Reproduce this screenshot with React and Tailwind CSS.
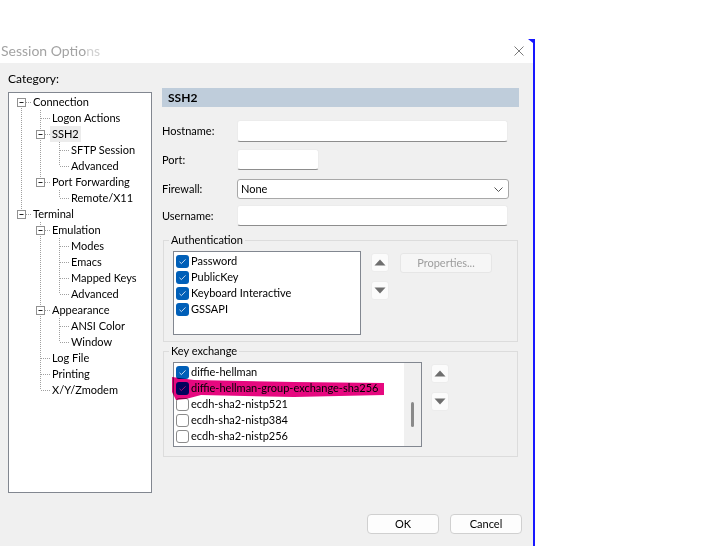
import { useMemo } from "react";

const tree = [
  {
    label: "Connection",
    children: [
      { label: "Logon Actions" },
      {
        label: "SSH2",
        selected: true,
        children: [{ label: "SFTP Session" }, { label: "Advanced" }],
      },
      { label: "Port Forwarding", children: [{ label: "Remote/X11" }] },
    ],
  },
  {
    label: "Terminal",
    children: [
      {
        label: "Emulation",
        children: [
          { label: "Modes" },
          { label: "Emacs" },
          { label: "Mapped Keys" },
          { label: "Advanced" },
        ],
      },
      { label: "Appearance", children: [{ label: "ANSI Color" }, { label: "Window" }] },
      { label: "Log File" },
      { label: "Printing" },
      { label: "X/Y/Zmodem" },
    ],
  },
];

const flatten = (nodes, guides = [], out = [], root = true) => {
  nodes.forEach((node, i) => {
    const hasNext = i < nodes.length - 1;
    out.push({
      ...node,
      guides,
      hasNext,
      firstRoot: root && i === 0,
      hasChildren: !!node.children,
    });
    if (node.children) flatten(node.children, [...guides, hasNext], out, false);
  });
  return out;
};

const dot = { stroke: "#a0a0a0", strokeDasharray: "1 1" };

const TreeCell = ({ up, down, branch, box }) => (
  <svg width="19" height="16" className="shrink-0">
    {up && <line x1="9.5" y1="0" x2="9.5" y2="8" {...dot} />}
    {down && <line x1="9.5" y1="8" x2="9.5" y2="16" {...dot} />}
    {branch && <line x1="10" y1="8.5" x2="19" y2="8.5" {...dot} />}
    {box && (
      <>
        <rect x="5.5" y="4.5" width="8" height="8" fill="#fff" stroke="#919191" />
        <line x1="7.5" y1="8.5" x2="11.5" y2="8.5" stroke="#222" />
      </>
    )}
  </svg>
);

const CategoryTree = () => {
  const rows = useMemo(() => flatten(tree), []);
  return (
    <div className="h-[401px] w-[144px] border border-[#828790] bg-white pl-[3px] pt-[1px]">
      {rows.map((row, i) => (
        <div key={i} className="flex h-[16px] items-center">
          {row.guides.map((g, j) => (
            <TreeCell key={j} up={g} down={g} />
          ))}
          <TreeCell up={!row.firstRoot} down={row.hasNext} branch box={row.hasChildren} />
          {row.selected ? (
            <span className="whitespace-nowrap bg-[#ececec] px-[2px]">{row.label}</span>
          ) : (
            <span className="ml-[2px] whitespace-nowrap">{row.label}</span>
          )}
        </div>
      ))}
    </div>
  );
};

const Check = ({ checked }) =>
  checked ? (
    <span className="flex h-[13px] w-[13px] shrink-0 items-center justify-center rounded-[3px] bg-[#005fb8]">
      <svg width="9" height="9" viewBox="0 0 9 9">
        <path d="M1.5 4.8 L3.4 6.6 L7.5 2.4" fill="none" stroke="#dce8f5" strokeWidth="0.9" />
      </svg>
    </span>
  ) : (
    <span className="h-[13px] w-[13px] shrink-0 rounded-[3px] border border-[#8b8b8b] bg-white" />
  );

const ListItem = ({ checked, children }) => (
  <div className="flex h-[16px] items-center pl-[2px]">
    <Check checked={checked} />
    <span className="ml-[2px] whitespace-nowrap">{children}</span>
  </div>
);

const ArrowButton = ({ down }) => (
  <div className="flex h-[19px] w-[18px] items-center justify-center rounded-[3px] border border-[#ececec] bg-[#fbfbfb]">
    <svg width="12" height="7" viewBox="0 0 12 7">
      {down ? (
        <path d="M0.5 0.5 H11.5 L6 6.5 Z" fill="#6e6e6e" />
      ) : (
        <path d="M0.5 6.5 H11.5 L6 0.5 Z" fill="#6e6e6e" />
      )}
    </svg>
  </div>
);

const Field = ({ label, className, children }) => (
  <div className={"flex items-center " + className}>
    <span className="w-[75px]">{label}</span>
    {children}
  </div>
);

const inputCls =
  "rounded-[3px] border border-[#ececec] border-b-[#8d8d8d] bg-white";

const keyExchange = [
  ["diffie-hellman", true],
  ["diffie-hellman-group-exchange-sha256", true],
  ["ecdh-sha2-nistp521", false],
  ["ecdh-sha2-nistp384", false],
  ["ecdh-sha2-nistp256", false],
];

export default function App() {
  return (
    <div className="h-[546px] w-[727px] overflow-hidden bg-white font-['Lato',sans-serif] text-[11px] leading-[16px] text-black">
      <div className="mt-[39px] flex h-[507px] w-[535px] flex-col border-r-2 border-[#1717ff]">
        {/* title bar */}
        <div className="flex h-[24px] shrink-0 items-center bg-white">
          <span className="flex-1 pl-[1px] text-[14px] leading-[18px] text-[#a3a3a3]">
            Session Optio<span className="text-[#d0d0d0]">ns</span>
          </span>
          <svg width="10" height="10" viewBox="0 0 10 10">
            <path d="M0.5 0.5 L9.5 9.5 M9.5 0.5 L0.5 9.5" stroke="#7a7a7a" strokeWidth="1" />
          </svg>
          <svg width="5" height="4" viewBox="0 0 5 4" className="ml-[4px] self-start">
            <path d="M0 0 H5 V4 Z" fill="#1717ff" />
          </svg>
        </div>

        {/* body */}
        <div className="flex flex-1 flex-col bg-[#f0f0f0]">
          <div className="flex">
            <div className="ml-[8px] mt-[8px] flex flex-col">
              <span className="text-[12px]">Category:</span>
              <div className="mt-[5px]">
                <CategoryTree />
              </div>
            </div>

            <div className="ml-[10px] mt-[25px] w-[357px]">
              <div className="flex h-[19px] items-center bg-[#bfcddb] pl-[6px] text-[12px] font-bold">SSH2</div>

              <Field label="Hostname:" className="mt-[13px]">
                <div className={inputCls + " h-[22px] w-[271px]"} />
              </Field>
              <Field label="Port:" className="mt-[7px]">
                <div className={inputCls + " h-[21px] w-[82px]"} />
              </Field>
              <Field label="Firewall:" className="mt-[9px]">
                <div className="flex h-[20px] w-[272px] items-center justify-between rounded-[3px] border border-[#a8a8a8] bg-white pl-[3px] pr-[5px]">
                  <span>None</span>
                  <svg width="9" height="5" viewBox="0 0 9 5">
                    <path d="M0.5 0.5 L4.5 4.5 L8.5 0.5" fill="none" stroke="#555" />
                  </svg>
                </div>
              </Field>
              <Field label="Username:" className="mt-[6px]">
                <div className={inputCls + " h-[21px] w-[271px]"} />
              </Field>

              <fieldset className="ml-[1px] mt-[6px] w-[355px] border border-[#dcdcdc] px-[5px] pb-[6px] pt-[3px]">
                <legend className="px-[2px]">Authentication</legend>
                <div className="ml-[4px] flex items-start">
                  <div className="h-[84px] w-[188px] border border-[#828790] bg-white pt-[1px]">
                    <ListItem checked>Password</ListItem>
                    <ListItem checked>PublicKey</ListItem>
                    <ListItem checked>Keyboard Interactive</ListItem>
                    <ListItem checked>GSSAPI</ListItem>
                  </div>
                  <div className="ml-[10px] mt-[2px] flex flex-col gap-[9px]">
                    <ArrowButton />
                    <ArrowButton down />
                  </div>
                  <div className="ml-[11px] mt-[2px] flex h-[20px] w-[92px] items-center justify-center rounded-[3px] border border-[#e6e6e6] bg-[#f6f6f6] text-[#9d9d9d]">
                    Properties...
                  </div>
                </div>
              </fieldset>

              <fieldset className="ml-[1px] mt-[1px] w-[355px] border border-[#dcdcdc] px-[5px] pb-[9px] pt-[3px]">
                <legend className="px-[2px]">Key exchange</legend>
                <div className="ml-[4px] flex items-start">
                  <div className="relative flex h-[85px] w-[249px] border border-[#828790] bg-white">
                    <div className="flex-1 pt-[1px]">
                      {keyExchange.map(([name, on]) => (
                        <ListItem key={name} checked={on}>
                          {name}
                        </ListItem>
                      ))}
                    </div>
                    <div className="flex w-[17px] justify-center bg-[#f0f0f0]">
                      <div className="mt-[39px] h-[25px] w-[3px] rounded-full bg-[#8a8a8a]" />
                    </div>
                    {/* marker highlight drawn over the row */}
                    <svg
                      width="214"
                      height="40"
                      viewBox="0 0 214 40"
                      className="pointer-events-none absolute left-[-3px] top-[0px] mix-blend-multiply"
                    >
                      <path
                        d="M1 14 L23 17 L123 19 L213 20 L213 32 L123 34 L30 32 L15 36 L5 37 L1 29 Z"
                        fill="#e6087f"
                      />
                    </svg>
                  </div>
                  <div className="ml-[9px] mt-[2px] flex flex-col gap-[9px]">
                    <ArrowButton />
                    <ArrowButton down />
                  </div>
                </div>
              </fieldset>
            </div>
          </div>

          <div className="flex-1" />
          <div className="flex justify-end gap-[11px] pb-[12px] pr-[11px]">
            <div className="flex h-[20px] w-[72px] items-center justify-center rounded-[4px] border border-[#d0d0d0] bg-[#fdfdfd]">
              OK
            </div>
            <div className="flex h-[20px] w-[72px] items-center justify-center rounded-[4px] border border-[#d0d0d0] bg-[#fdfdfd]">
              Cancel
            </div>
          </div>
        </div>
      </div>
    </div>
  );
}
